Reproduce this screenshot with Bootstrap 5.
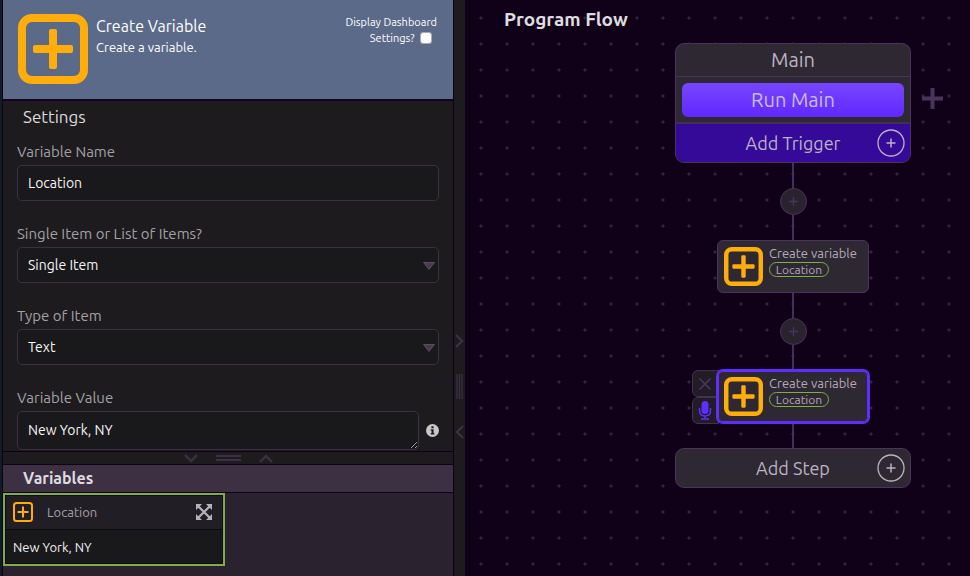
<!DOCTYPE html>
<html lang="en">
<head>
<meta charset="utf-8">
<meta name="viewport" content="width=device-width, initial-scale=1">
<title>Program Flow</title>
<link href="https://cdn.jsdelivr.net/npm/bootstrap@5.3.0/dist/css/bootstrap.min.css" rel="stylesheet">
<style>
:root{--ink:#110118;--panel:#1d1b1e;--edge:#3d3042;--node:#2d2831;--line:#4b335f;--hot:#5f2eff;--amber:#ffad0a;--green:#7fae45}
body{font-family:Ubuntu,"Noto Sans",sans-serif;font-size:14px;line-height:20px;color:#e8e6ea;background:var(--ink)}
svg{display:block;flex:none}
.strip{width:3px;background:#131b2b;border-right:1px solid #08070a}
.sidebar{width:450px}
.banner{height:101px;background:#5c6a89;border-bottom:2px solid #130320;padding:14px 16px 0 15px;color:#fff}
.banner h1{font-size:16px;line-height:24px}
.banner p{font-size:13px;line-height:18px}
.dash{font-size:11px;line-height:16px}
.dash input{width:12px;height:12px;appearance:none;background:#fff;border:1px solid #aaa;border-radius:3px;margin:0 5px 0 3px;vertical-align:-2px}
.dash input:checked{background:var(--hot)}
.settings{background:var(--panel);padding:0 14px}
.settings h2{font-size:17px;line-height:32px;padding-left:6px;margin-bottom:9px;color:#dcdadd}
.field{margin-bottom:23px}
.field label{display:block;margin-bottom:3px;font-size:15px;color:#a3a1a4}
.field .form-control,.field .form-select{height:36px;padding:0 10px;font-size:14px;color:#f5f5f5;background-color:#19181a;border:1px solid var(--edge);border-radius:5px;box-shadow:none}
.field .form-select{background-image:url("data:image/svg+xml,%3Csvg xmlns='http://www.w3.org/2000/svg' viewBox='0 0 12 8'%3E%3Cpath d='M.5.5h11L6 7.5z' fill='%234a3a50' stroke='%23776a7c' stroke-width='.6'/%3E%3C/svg%3E");background-size:12px 8px;background-position:right 3px top 14px}
.field textarea.form-control{height:39px;min-height:39px;padding-top:8px;line-height:20px;overflow:hidden}
.bare{background:none;border:0;padding:0;display:block}
.info{width:20px;padding-left:7px;flex:none}
.hbar{height:14px;background:var(--panel);border:1px solid var(--ink);border-width:1px 0;gap:18px;color:var(--edge)}
.vars{height:111px;background:#2b222f}
.vars h2{font-size:16px;line-height:27px;font-weight:600;padding-left:20px;background:#3d3042;border-bottom:1px solid var(--ink);color:#dedce0}
.varcard{width:222px;border:2px solid var(--green);background:#19181a;box-shadow:inset 0 0 0 1px #0c0b0d}
.varhead{height:35px;background:#211f25;border:1px solid #0c0b0d;padding:0 10px 1px 7px;gap:14px;color:#a3a1a4;font-size:13px}
.varbody{line-height:34px;padding-left:8px;font-size:13px;color:#f0eff0}
.vbar{width:12px;background:var(--panel);border-left:1px solid var(--ink);color:var(--edge);padding-bottom:137px;gap:26px}
.canvas{background:radial-gradient(circle at 13px 13px,#302834 1px,transparent 2px) 3px 5px/26px 26px,var(--ink)}
.canvas h2{font-size:19px;line-height:24px;font-weight:600;padding:7px 0 0 39px;color:#dedce0}
.flow{left:210px;top:43px;width:236px}
.block{background:var(--node);border:1px solid var(--line);border-radius:9px;color:#bdb2c4;overflow:hidden}
.block h3{font-size:20px;line-height:32px;border-bottom:1px solid var(--line)}
.run{padding:6px 6px 5px;border-bottom:2px solid #3f3053}
.run button{font-size:20px;line-height:34px;border:0;border-radius:6px;background:linear-gradient(#7746ff,#6128ff);color:#c9bde0}
.add{font-size:18px;line-height:38px;border:0;background:none;color:#bdb2c4}
.add svg{right:5px;top:5px}
.trigger{background:#350a98}
.wire{width:2px;height:25px;background:#41305a}
.insert{width:27px;height:27px;border:1px solid var(--line);border-radius:50%;background:#29232e;color:#4b335f}
.step{width:152px;height:53px;background:var(--node);border:1px solid var(--line);border-radius:6px;padding:0 6px;gap:6px;color:#b4aab9;font-size:13px;line-height:16px}
.step.picked{box-shadow:0 0 0 1px var(--hot),inset 0 0 0 1px var(--hot);border-color:var(--hot);z-index:1}
.name{padding-top:4px;margin-bottom:1px}
.pill{width:60px;border:1px solid var(--green);border-radius:8px;line-height:13px;font-size:12px;text-align:center}
.tabs{right:calc(50% + 74px);top:0}
.tabs button{width:27px;height:27px;border:1px solid #44304f;border-radius:6px 0 0 6px;background:#211c26;color:#4b335f}
.branch{left:457px;top:88px;color:#4b335f}
</style>
<script src="https://cdn.jsdelivr.net/npm/bootstrap@5.3.0/dist/js/bootstrap.bundle.min.js"></script>
</head>
<body>
<svg width="0" height="0" class="position-absolute" aria-hidden="true">
<symbol id="plusbox" viewBox="0 0 70 70"><rect x="4" y="4" width="62" height="62" rx="10" fill="none" stroke="#ffad0a" stroke-width="8"/><path d="M31 17q0-2 2-2h4q2 0 2 2v14h14q2 0 2 2v4q0 2-2 2H39v14q0 2-2 2h-4q-2 0-2-2V39H17q-2 0-2-2v-4q0-2 2-2h14z" fill="#ffad0a"/></symbol>
<symbol id="ring" viewBox="0 0 28 28"><circle cx="14" cy="14" r="13" fill="none" stroke="currentColor" stroke-width="1.3"/><path d="M9.5 14h9M14 9.5v9" stroke="currentColor" stroke-width="1.5"/></symbol>
<symbol id="chev" viewBox="0 0 9 14"><path d="M1 1l6 6-6 6" fill="none" stroke="currentColor" stroke-width="2.4"/></symbol>
<symbol id="plus" viewBox="0 0 10 10"><path d="M0 5h10M5 0v10" stroke="currentColor" stroke-width="1.5"/></symbol>
</svg>
<div class="d-flex vh-100 overflow-hidden">
  <div class="strip flex-shrink-0"></div>
  <aside class="sidebar d-flex flex-column flex-shrink-0">
    <header class="banner d-flex flex-shrink-0">
      <svg width="70" height="70"><use href="#plusbox"/></svg>
      <div class="flex-grow-1 ps-2"><h1 class="mb-0 fw-normal">Create Variable</h1><p class="mb-0">Create a variable.</p></div>
      <div class="dash text-end text-nowrap"><label class="d-inline" for="dash">Display Dashboard<br>Settings?</label> <input type="checkbox" id="dash"></div>
    </header>
    <section class="settings flex-grow-1 overflow-hidden">
      <h2 class="fw-normal">Settings</h2>
      <div class="field"><label for="vname">Variable Name</label><input class="form-control" id="vname" value="Location"></div>
      <div class="field"><label for="kind">Single Item or List of Items?</label><select class="form-select" id="kind"><option>Single Item</option><option>List of Items</option></select></div>
      <div class="field"><label for="type">Type of Item</label><select class="form-select" id="type"><option>Text</option><option>Number</option></select></div>
      <div class="field"><label for="val">Variable Value</label>
        <div class="d-flex align-items-center"><textarea class="form-control flex-grow-1" id="val" rows="1">New York, NY</textarea>
        <button class="bare info" type="button" aria-label="Information"><svg width="13" height="13" viewBox="0 0 13 13"><circle cx="6.5" cy="6.5" r="6.5" fill="#c9c8c9"/><path d="M5.4 2.3h2.2v2H5.4zM4.7 5.2h2.9v4h.8v1.300H4.7V9.2h.8V6.5h-.8z" fill="#1d1b1e"/></svg></button></div>
      </div>
    </section>
    <div class="hbar d-flex align-items-center justify-content-center flex-shrink-0">
      <button class="bare text-reset" type="button" aria-label="Collapse"><svg width="14" height="9" viewBox="0 0 14 9"><path d="M1 1l6 6 6-6" fill="none" stroke="currentColor" stroke-width="2.4"/></svg></button>
      <svg width="25" height="6" viewBox="0 0 25 6"><path d="M0 1h25M0 5h25" stroke="currentColor" stroke-width="2"/></svg>
      <button class="bare text-reset" type="button" aria-label="Expand"><svg width="14" height="9" viewBox="0 0 14 9"><path d="M1 8l6-6 6 6" fill="none" stroke="currentColor" stroke-width="2.4"/></svg></button>
    </div>
    <section class="vars flex-shrink-0">
      <h2 class="mb-0">Variables</h2>
      <article class="varcard">
        <div class="varhead d-flex align-items-center">
          <svg width="20" height="20" viewBox="0 0 20 20" fill="none" stroke="#ffad0a" stroke-width="2"><rect x="1" y="1" width="18" height="18" rx="2.5"/><path d="M4.5 10h11M10 4.5v11"/></svg>
          <span class="flex-grow-1">Location</span>
          <button class="bare" type="button" aria-label="Enlarge"><svg width="16" height="16" viewBox="0 0 16 16" fill="#b5b2b8"><path d="M0 0h6L0 6zM16 0v6l-6-6zM0 16v-6l6 6zM16 16h-6l6-6z"/><path d="M2 2l12 12M14 2L2 14" stroke="#b5b2b8" stroke-width="2.2"/></svg></button>
        </div>
        <div class="varbody">New York, NY</div>
      </article>
    </section>
  </aside>
  <div class="vbar d-flex flex-column align-items-center justify-content-end flex-shrink-0">
    <button class="bare text-reset" type="button" aria-label="Widen"><svg width="9" height="14"><use href="#chev"/></svg></button>
    <svg width="7" height="25" viewBox="0 0 7 25"><path d="M1 0v25M3.500 0v25M6 0v25" stroke="currentColor" stroke-width="1.300"/></svg>
    <button class="bare text-reset" type="button" aria-label="Narrow"><svg width="9" height="14" viewBox="0 0 9 14"><path d="M8 1L2 7l6 6" fill="none" stroke="currentColor" stroke-width="2.4"/></svg></button>
  </div>
  <main class="canvas position-relative flex-grow-1 overflow-hidden">
    <h2>Program Flow</h2>
    <button class="bare branch position-absolute" type="button" aria-label="Add branch"><svg width="21" height="21" viewBox="0 0 21 21"><path d="M0 10.500h21M10.500 0v21" stroke="currentColor" stroke-width="4"/></svg></button>
    <div class="flow position-absolute d-flex flex-column align-items-center">
      <section class="block w-100 text-center">
        <h3 class="mb-0 fw-normal">Main</h3>
        <div class="run"><button class="w-100 p-0 d-block" type="button">Run Main</button></div>
        <button class="add trigger w-100 p-0 d-block position-relative" type="button">Add Trigger<svg class="position-absolute" width="28" height="28"><use href="#ring"/></svg></button>
      </section>
      <div class="wire"></div>
      <button class="insert p-0 d-flex align-items-center justify-content-center" type="button" aria-label="Insert step"><svg width="9" height="9"><use href="#plus"/></svg></button>
      <div class="wire"></div>
      <article class="step d-flex"><svg class="align-self-center" width="39" height="39"><use href="#plusbox"/></svg><div class="text-nowrap"><div class="name">Create variable</div><div class="pill">Location</div></div></article>
      <div class="wire"></div>
      <button class="insert p-0 d-flex align-items-center justify-content-center" type="button" aria-label="Insert step"><svg width="9" height="9"><use href="#plus"/></svg></button>
      <div class="wire"></div>
      <div class="position-relative w-100 d-flex justify-content-center">
        <div class="tabs position-absolute">
          <button class="d-flex align-items-center p-0 ps-1" type="button" aria-label="Delete"><svg width="16" height="14" viewBox="0 0 16 14"><path d="M2.500 1.500l11 11M13.500 1.500l-11 11" stroke="currentColor" stroke-width="1.700"/></svg></button>
          <button class="d-flex align-items-center p-0 ps-1" type="button" aria-label="Record"><svg width="16" height="19" viewBox="0 0 16 19"><rect x="4.500" y="0" width="7" height="13" rx="3.500" fill="#5f2eff"/><path d="M2.500 7v2.500q0 5.500 5.500 5.500t5.500-5.500V7M8 15v3M4 18h8" fill="none" stroke="#5f2eff" stroke-width="1.500"/></svg></button>
        </div>
        <article class="step picked position-relative d-flex"><svg class="align-self-center" width="39" height="39"><use href="#plusbox"/></svg><div class="text-nowrap"><div class="name">Create variable</div><div class="pill">Location</div></div></article>
      </div>
      <div class="wire"></div>
      <div class="block w-100"><button class="add w-100 p-0 d-block position-relative" type="button">Add Step<svg class="position-absolute" width="28" height="28"><use href="#ring"/></svg></button></div>
    </div>
  </main>
</div>
</body>
</html>
